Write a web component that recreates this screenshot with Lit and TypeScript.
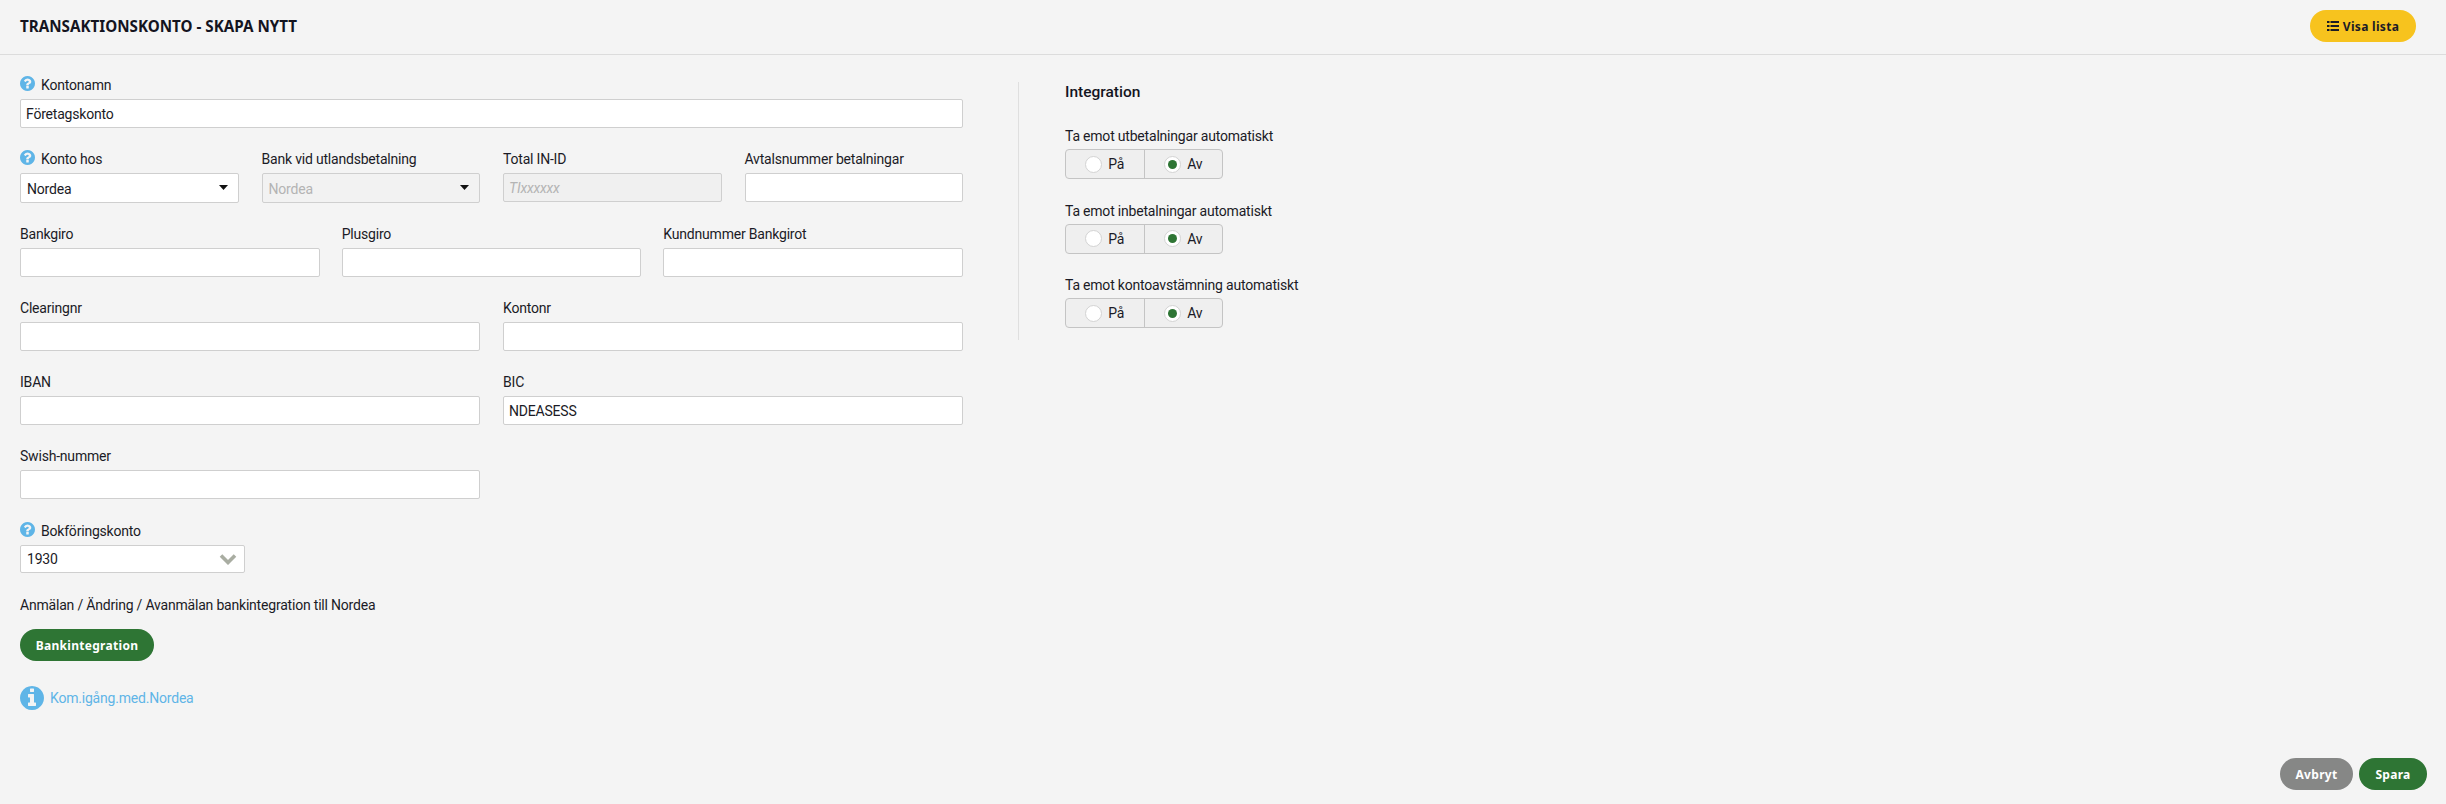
import { LitElement, html, css, svg } from "lit";
import { customElement } from "lit/decorators.js";

const Q = "M896 1376v-192q0-14-9-23t-23-9h-192q-14 0-23 9t-9 23v192q0 14 9 23t23 9h192q14 0 23-9t9-23zm256-672q0-88-55.5-163t-138.5-116-170-41q-243 0-371 213-15 24 8 42l132 100q7 6 19 6 16 0 25-12 53-68 86-92 34-24 86-24 48 0 85.5 26t37.5 59q0 38-20 61t-68 45q-63 28-115.5 86.5t-52.5 125.5v36q0 14 9 23t23 9h192q14 0 23-9t9-23q0-19 21.5-49.5t54.5-49.5q32-18 49-28.5t46-35 44.5-48 28-60.5 12.5-81zm384 192q0 209-103 385.5t-279.5 279.5-385.5 103-385.5-103-279.5-279.5-103-385.5 103-385.5 279.5-279.5 385.5-103 385.5 103 279.5 279.5 103 385.5z";
const I = "M1024 1376v-160q0-14-9-23t-23-9h-96v-512q0-14-9-23t-23-9h-320q-14 0-23 9t-9 23v160q0 14 9 23t23 9h96v320h-96q-14 0-23 9t-9 23v160q0 14 9 23t23 9h448q14 0 23-9t9-23zm-128-896v-160q0-14-9-23t-23-9h-192q-14 0-23 9t-9 23v160q0 14 9 23t23 9h192q14 0 23-9t9-23zm640 416q0 209-103 385.5t-279.5 279.5-385.5 103-385.5-103-279.5-279.5-103-385.5 103-385.5 279.5-279.5 385.5-103 385.5 103 279.5 279.5 103 385.5z";

const circleIcon = (d: string, cls: string) =>
  html`<svg class=${cls} viewBox="0 128 1536 1536">${svg`<path fill="#5fb5e7" fill-rule="evenodd" d=${d}></path>`}</svg>`;

@customElement("app-root")
export class AppRoot extends LitElement {
  static styles = css`
    :host {
      display: flex;
      flex-direction: column;
      height: 804px;
      background: #f4f4f4;
      color: #1b1b26;
      font-family: Roboto, "Liberation Sans", sans-serif;
      font-size: 14px;
      letter-spacing: -0.2px;
      box-sizing: border-box;
    }
    * { box-sizing: border-box; }
    .top {
      height: 55px;
      flex: none;
      border-bottom: 1px solid #dcdcdc;
      display: flex;
      align-items: center;
      justify-content: space-between;
      padding: 0 30px 2px 20px;
    }
    h1 {
      margin: 0;
      font-family: "Noto Sans", sans-serif;
      font-weight: 700;
      font-size: 15.2px;
      letter-spacing: 0;
      color: #14141f;
    }
    .pill {
      border: 0;
      border-radius: 16px;
      height: 32px;
      display: inline-flex;
      align-items: center;
      justify-content: center;
      gap: 4px;
      font-family: "Noto Sans", sans-serif;
      font-weight: 700;
      font-size: 12px;
      letter-spacing: 0.3px;
      color: #fff;
      padding: 0;
    }
    .yellow { background: #f7c31e; color: #1b1b26; width: 106px; }
    .green { background: #2e7534; }
    .grey { background: #868786; width: 73px; }
    .bank { width: 134px; }
    .save { width: 68px; }
    .main {
      flex: 1;
      display: flex;
      padding: 20px 0 0 20px;
    }
    .left {
      width: 943px;
      flex: none;
      display: flex;
      flex-direction: column;
      gap: 21px;
    }
    .row { display: grid; column-gap: 23px; }
    .c1 { grid-template-columns: 1fr; }
    .c2 { grid-template-columns: repeat(2, 1fr); }
    .c3 { grid-template-columns: repeat(3, 1fr); column-gap: 22px; }
    .c4 { grid-template-columns: repeat(4, 1fr); }
    .field { display: flex; flex-direction: column; min-width: 0; }
    .field.bookf { margin-top: 1px; }
    .lbl {
      height: 20px;
      line-height: 20px;
      margin-bottom: 4px;
      display: flex;
      align-items: center;
      gap: 6px;
      white-space: nowrap;
    }
    .q { width: 15px; height: 15px; margin-top: -4px; flex: none; }
    input, .sel {
      display: block;
      width: 100%;
      height: 29px;
      border: 1px solid #cfcfcf;
      border-radius: 2px;
      background: #fff;
      padding: 0 5px;
      font: inherit;
      letter-spacing: inherit;
      color: #1b1b26;
      outline: none;
    }
    input.dis { background: #f0f0f0; }
    input.dis::placeholder { color: #b4b4b4; font-style: italic; opacity: 1; }
    .sel {
      height: 30px;
      display: flex;
      align-items: center;
      justify-content: space-between;
      padding: 1px 10px 0 6px;
    }
    .sel.off { background: #f2f2f2; color: #b4b4b4; }
    .caret { width: 9px; height: 5px; flex: none; margin-top: -2px; }
    .book { width: 225px; height: 28px; padding: 0 7px 0 6px; }
    .chev { width: 18px; height: 12px; flex: none; }
    .note { margin: 1px 0 0; line-height: 20px; }
    .bank { margin-top: -7px; }
    .info {
      display: flex;
      align-items: center;
      gap: 6px;
      color: #5fb5e7;
      margin-top: 4px;
    }
    .info svg { width: 24px; height: 24px; flex: none; }
    .rule {
      width: 1px;
      height: 258px;
      background: #dfdfdf;
      margin: 7px 45px 0 55px;
      flex: none;
    }
    .right { display: flex; flex-direction: column; margin-left: 1px; }
    h2 {
      margin: 7px 0 0;
      font-size: 15.5px;
      font-weight: 500;
      letter-spacing: 0;
      line-height: 20px;
      color: #14141f;
    }
    .toggles { display: flex; flex-direction: column; gap: 21.5px; margin-top: 24px; }
    .tlabel { line-height: 20px; height: 20px; margin-bottom: 3px; }
    .group {
      display: flex;
      width: 158px;
      height: 30px;
      border: 1px solid #c4c4c4;
      border-radius: 4px;
      background: #efefef;
    }
    .opt {
      flex: 1;
      display: flex;
      align-items: center;
      justify-content: center;
      gap: 6px;
    }
    .opt + .opt { border-left: 1px solid #c4c4c4; }
    .radio {
      width: 17px;
      height: 17px;
      border-radius: 50%;
      background: #fff;
      border: 1.5px solid #d3d3d3;
      display: flex;
      align-items: center;
      justify-content: center;
    }
    .radio.on::after {
      content: "";
      width: 9px;
      height: 9px;
      border-radius: 50%;
      background: #2e7534;
    }
    .foot {
      display: flex;
      justify-content: flex-end;
      gap: 6px;
      padding: 0 19px 14px 0;
      flex: none;
    }
  `;

  private field(label: string, value = "", help = false) {
    return html`<div class="field">
      <div class="lbl">${help ? circleIcon(Q, "q") : ""}${label}</div>
      <input type="text" .value=${value} />
    </div>`;
  }

  private select(label: string, value: string, help: boolean, off: boolean) {
    return html`<div class="field">
      <div class="lbl">${help ? circleIcon(Q, "q") : ""}${label}</div>
      <div class="sel ${off ? "off" : ""}">
        <span>${value}</span>
        <svg class="caret" viewBox="0 0 9 5"><path d="M0 0h9L4.5 5z" fill="#111"></path></svg>
      </div>
    </div>`;
  }

  private toggle(label: string) {
    return html`<div>
      <div class="tlabel">${label}</div>
      <div class="group">
        <div class="opt"><span class="radio"></span>På</div>
        <div class="opt"><span class="radio on"></span>Av</div>
      </div>
    </div>`;
  }

  render() {
    return html`
      <header class="top">
        <h1>TRANSAKTIONSKONTO - SKAPA NYTT</h1>
        <button class="pill yellow">
          <svg width="12" height="10" viewBox="0 0 12 10" fill="#1b1b26">
            <rect x="0" y="0" width="2.5" height="2"></rect><rect x="3.5" y="0" width="8.5" height="2"></rect>
            <rect x="0" y="4" width="2.5" height="2"></rect><rect x="3.5" y="4" width="8.5" height="2"></rect>
            <rect x="0" y="8" width="2.5" height="2"></rect><rect x="3.5" y="8" width="8.5" height="2"></rect>
          </svg>
          Visa lista
        </button>
      </header>
      <main class="main">
        <section class="left">
          <div class="row c1">${this.field("Kontonamn", "Företagskonto", true)}</div>
          <div class="row c4">
            ${this.select("Konto hos", "Nordea", true, false)}
            ${this.select("Bank vid utlandsbetalning", "Nordea", false, true)}
            <div class="field">
              <div class="lbl">Total IN-ID</div>
              <input class="dis" type="text" placeholder="TIxxxxxx" disabled />
            </div>
            ${this.field("Avtalsnummer betalningar")}
          </div>
          <div class="row c3">
            ${this.field("Bankgiro")}${this.field("Plusgiro")}${this.field("Kundnummer Bankgirot")}
          </div>
          <div class="row c2">${this.field("Clearingnr")}${this.field("Kontonr")}</div>
          <div class="row c2">${this.field("IBAN")}${this.field("BIC", "NDEASESS")}</div>
          <div class="row c2">${this.field("Swish-nummer")}</div>
          <div class="field bookf">
            <div class="lbl">${circleIcon(Q, "q")}Bokföringskonto</div>
            <div class="sel book">
              <span>1930</span>
              <svg class="chev" viewBox="0 0 18 12">
                <path d="M2 2.5l7 7 7-7" fill="none" stroke="#a9ada2" stroke-width="3.6"></path>
              </svg>
            </div>
          </div>
          <p class="note">Anmälan / Ändring / Avanmälan bankintegration till Nordea</p>
          <div><button class="pill green bank">Bankintegration</button></div>
          <div class="info">${circleIcon(I, "")}<span>Kom.igång.med.Nordea</span></div>
        </section>
        <div class="rule"></div>
        <aside class="right">
          <h2>Integration</h2>
          <div class="toggles">
            ${this.toggle("Ta emot utbetalningar automatiskt")}
            ${this.toggle("Ta emot inbetalningar automatiskt")}
            ${this.toggle("Ta emot kontoavstämning automatiskt")}
          </div>
        </aside>
      </main>
      <footer class="foot">
        <button class="pill grey">Avbryt</button>
        <button class="pill green save">Spara</button>
      </footer>
    `;
  }
}
